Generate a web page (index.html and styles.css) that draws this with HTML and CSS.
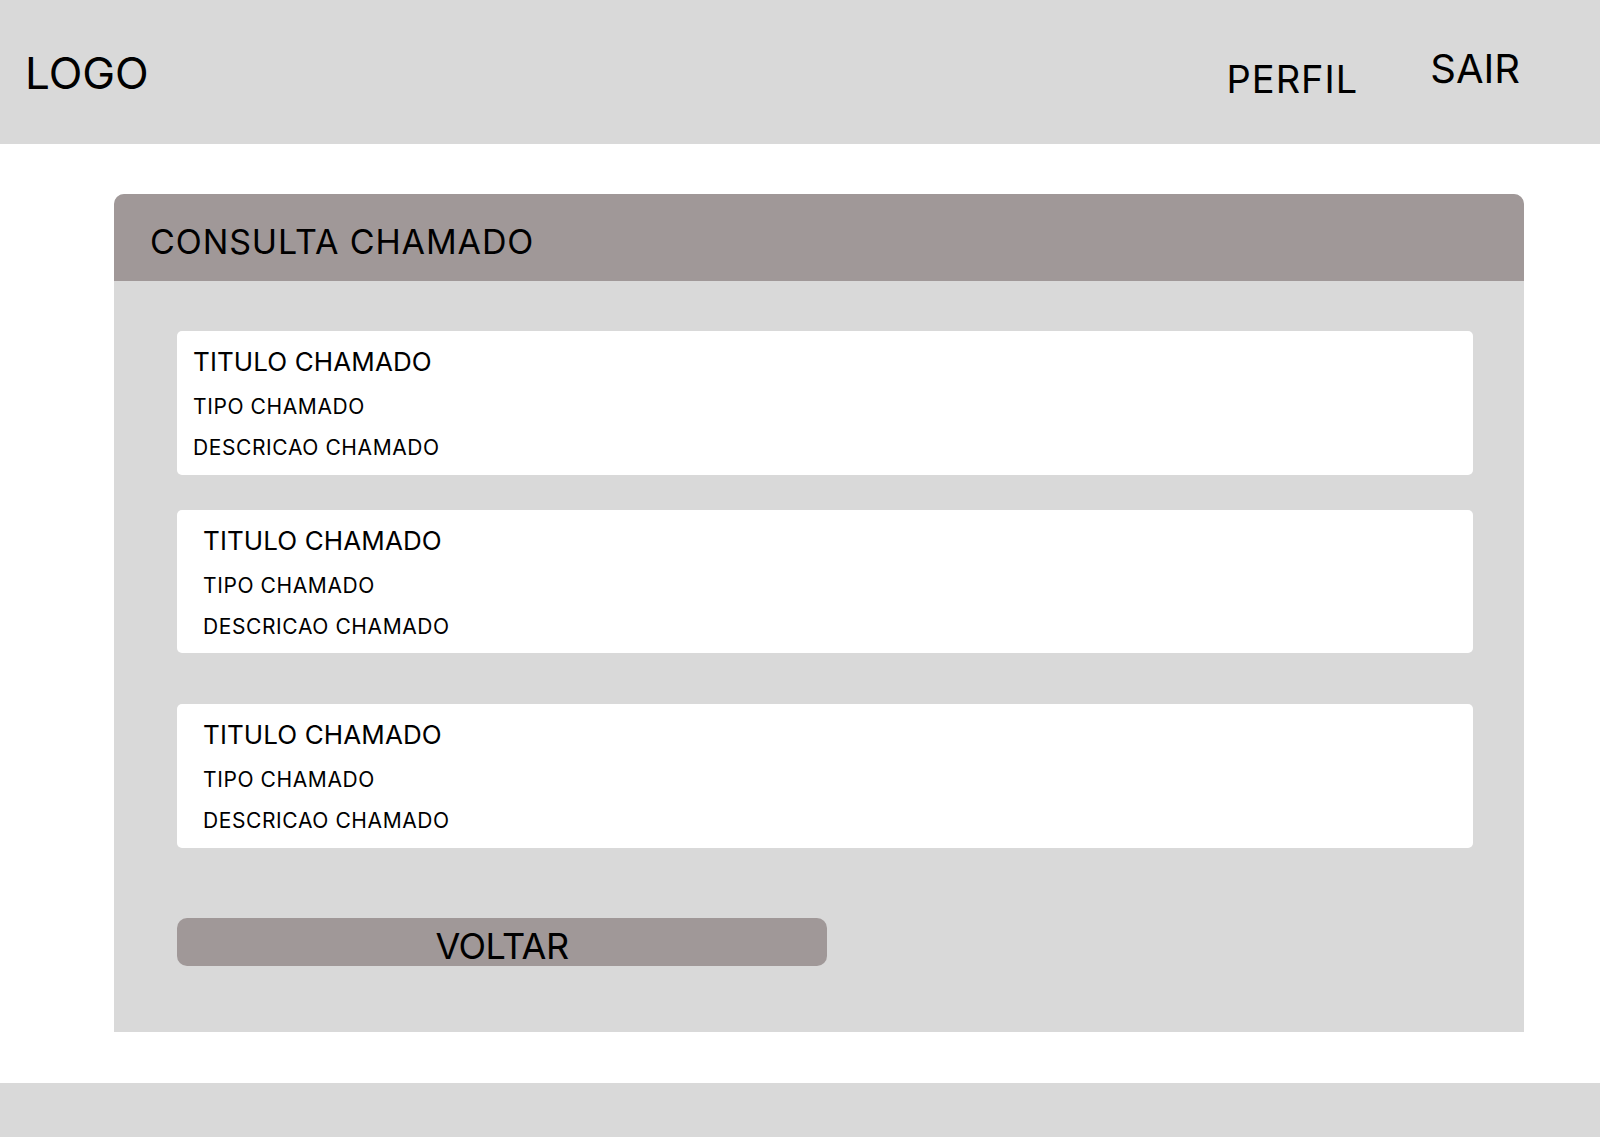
FILE: index.html
```html
<!DOCTYPE html>
<html lang="pt">
<head>
<meta charset="utf-8">
<title>Consulta Chamado</title>
<link rel="stylesheet" href="styles.css">
</head>
<body>
<header class="topbar">
  <div class="logo">LOGO</div>
  <nav class="nav">
    <a class="nav-perfil" href="#">PERFIL</a>
    <a class="nav-sair" href="#">SAIR</a>
  </nav>
</header>
<main class="main">
  <section class="panel">
    <div class="panel-head">CONSULTA CHAMADO</div>
    <div class="panel-body">
      <div class="card card-a">
        <div class="c-title">TITULO CHAMADO</div>
        <div class="c-type">TIPO CHAMADO</div>
        <div class="c-desc">DESCRICAO CHAMADO</div>
      </div>
      <div class="card card-b">
        <div class="c-title">TITULO CHAMADO</div>
        <div class="c-type">TIPO CHAMADO</div>
        <div class="c-desc">DESCRICAO CHAMADO</div>
      </div>
      <div class="card card-c">
        <div class="c-title">TITULO CHAMADO</div>
        <div class="c-type">TIPO CHAMADO</div>
        <div class="c-desc">DESCRICAO CHAMADO</div>
      </div>
      <button class="btn-back">VOLTAR</button>
    </div>
  </section>
</main>
<footer class="footer"></footer>
</body>
</html>
```
FILE: styles.css
```css
* { box-sizing: border-box; }
html, body { margin: 0; padding: 0; }
body {
  font-family: Inter, "Noto Sans", sans-serif;
  color: #000;
  background: #fff;
  width: 1600px;
}
.topbar {
  height: 144px;
  background: #d9d9d9;
  display: flex;
  align-items: flex-start;
  padding-left: 25px;
}
.logo {
  font-size: 44px;
  line-height: 44px;
  margin-top: 51px;
}
.nav {
  margin-left: auto;
  display: flex;
  align-items: flex-start;
  padding-right: 80px;
  gap: 72px;
}
.nav a { color: #000; text-decoration: none; }
.nav-perfil {
  font-size: 38px;
  line-height: 38px;
  letter-spacing: 1px;
  margin-top: 60px;
}
.nav-sair {
  font-size: 40px;
  line-height: 40px;
  margin-top: 49px;
}
.main {
  padding: 50px 0 51px 114px;
}
.panel {
  width: 1410px;
  height: 838px;
  background: #d9d9d9;
  border-radius: 10px 10px 0 0;
  display: flex;
  flex-direction: column;
}
.panel-head {
  height: 87px;
  background: #a09898;
  border-radius: 10px 10px 0 0;
  font-size: 34px;
  line-height: 34px;
  letter-spacing: 0.9px;
  padding: 31px 0 0 36px;
}
.panel-body {
  padding: 50px 0 0 63px;
  display: flex;
  flex-direction: column;
  align-items: flex-start;
}
.card {
  width: 1296px;
  height: 144px;
  background: #fff;
  border-radius: 5px;
  padding: 13px 16px 0;
}
.card-b, .card-c { padding-left: 26px; }
.card-b { margin-top: 35px; height: 143px; padding-top: 13px; }
.card-c { margin-top: 51px; padding-top: 13px; }
.c-title {
  font-size: 26px;
  line-height: 36px;
  letter-spacing: 0.1px;
}
.c-type {
  font-size: 21px;
  line-height: 40px;
  letter-spacing: 0.6px;
  margin-top: 7px;
}
.c-desc {
  font-size: 21px;
  line-height: 40px;
  letter-spacing: 0.6px;
  margin-top: 1px;
}
.btn-back {
  margin-top: 70px;
  width: 650px;
  height: 48px;
  background: #a09898;
  border: 0;
  border-radius: 10px;
  font-family: Inter, "Noto Sans", sans-serif;
  font-size: 36px;
  line-height: 36px;
  letter-spacing: -0.5px;
  color: #000;
  padding: 10px 0 0;
  display: flex;
  justify-content: center;
  align-items: flex-start;
}
.footer {
  height: 54px;
  background: #d9d9d9;
}
```
